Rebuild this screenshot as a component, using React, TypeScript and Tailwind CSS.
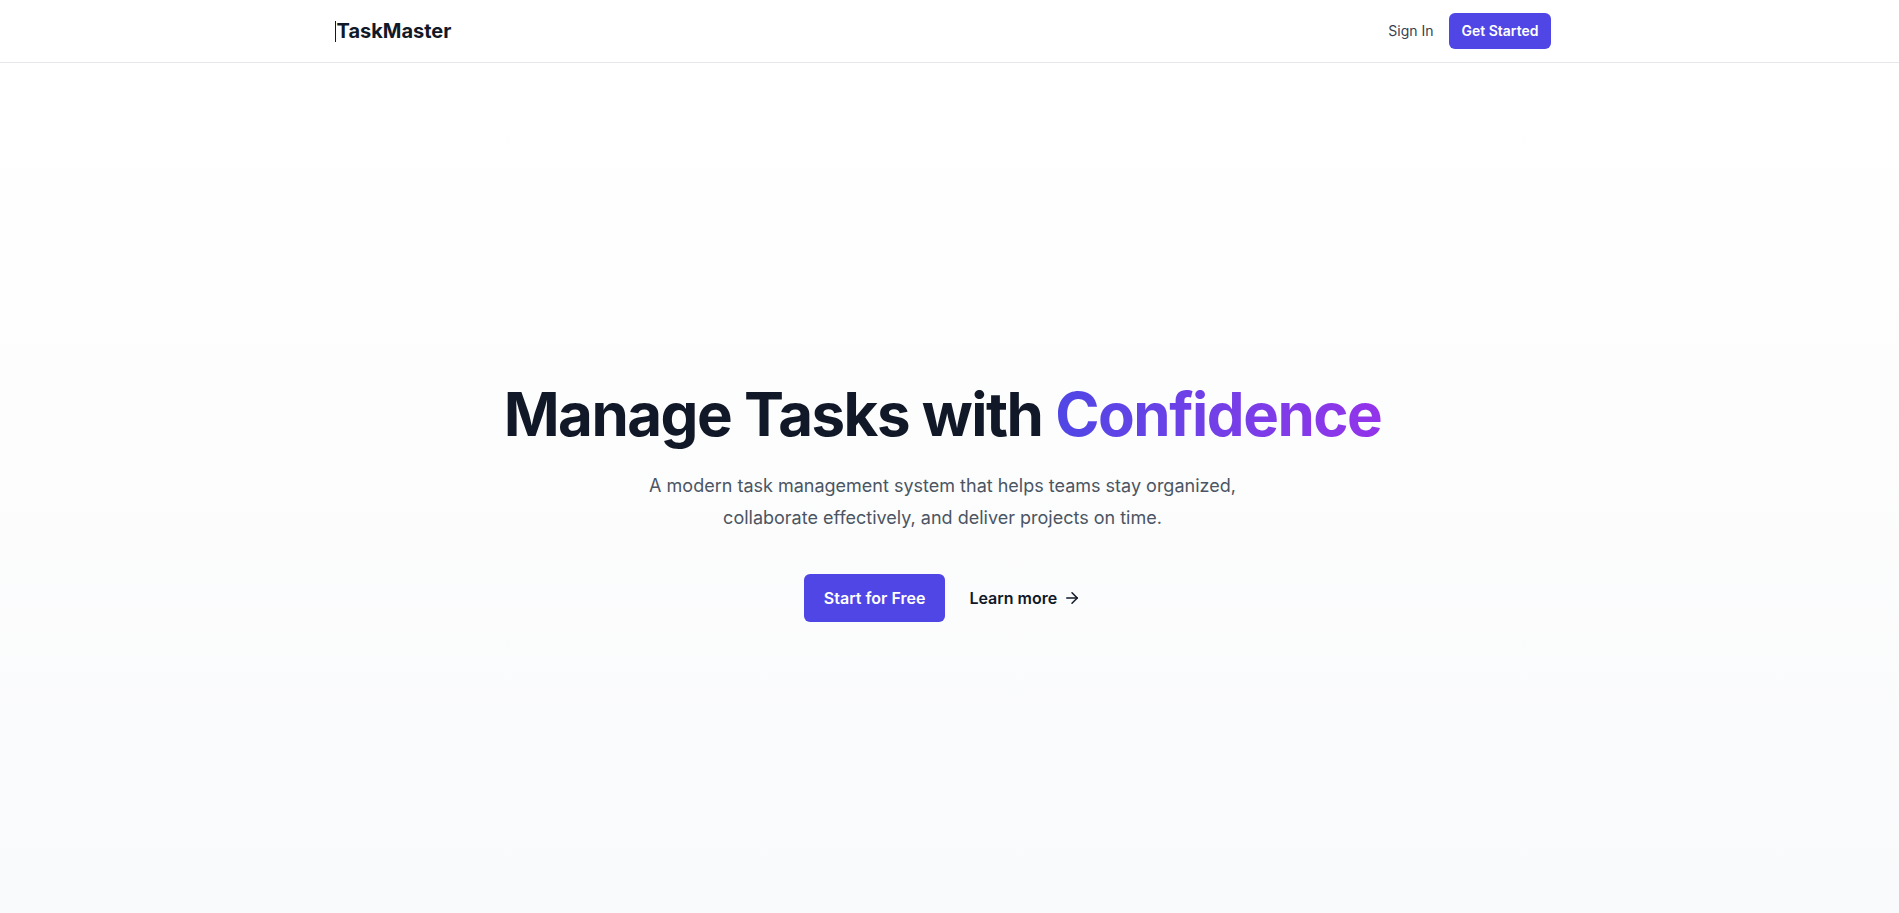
import { ArrowRight } from "lucide-react";

const font = { fontFamily: "Inter, 'Noto Sans', sans-serif" };

function Header() {
  return (
    <header className="bg-white border-b border-[#e5e7eb] pr-[14px]">
      <div className="max-w-7xl mx-auto px-8 h-[62px] flex items-center justify-between">
        <div className="flex items-center">
          <span className="w-px h-[21px] bg-[#111827] mt-[1px]" />
          <span className="text-xl font-bold text-[#111827] ml-[1px]">TaskMaster</span>
        </div>
        <div className="flex items-center gap-4">
          <a href="#" className="text-sm text-[#374151] ml-1">
            Sign In
          </a>
          <button className="h-9 px-3 rounded-md bg-[#4f46e5] text-white text-sm font-semibold">
            Get Started
          </button>
        </div>
      </div>
    </header>
  );
}

function Hero() {
  return (
    <section className="bg-gradient-to-b from-white to-[#f9fafb] h-[851px] pr-[14px]">
      <div className="max-w-7xl mx-auto px-8 pt-[321px] text-center">
        <h1 className="text-6xl font-bold tracking-tight text-[#111827]">
          Manage Tasks with{" "}
          <span className="bg-gradient-to-r from-[#4f46e5] to-[#9333ea] bg-clip-text text-transparent">
            Confidence
          </span>
        </h1>
        <p className="mt-[26px] mx-auto max-w-2xl text-lg leading-8 text-[#4b5563]">
          A modern task management system that helps teams stay organized, collaborate effectively, and
          deliver projects on time.
        </p>
        <div className="mt-10 flex items-center justify-center gap-6">
          <button className="px-5 py-3 rounded-md bg-[#4f46e5] text-white text-base font-semibold">
            Start for Free
          </button>
          <a href="#" className="flex items-center gap-[6px] text-base font-semibold text-[#111827]">
            Learn more
            <ArrowRight className="w-[18px] h-[18px]" strokeWidth={2} />
          </a>
        </div>
      </div>
    </section>
  );
}

export default function App() {
  return (
    <div style={font} className="min-h-screen bg-[#f9fafb]">
      <Header />
      <Hero />
      <div className="h-[1200px] bg-[#f9fafb]" />
    </div>
  );
}
